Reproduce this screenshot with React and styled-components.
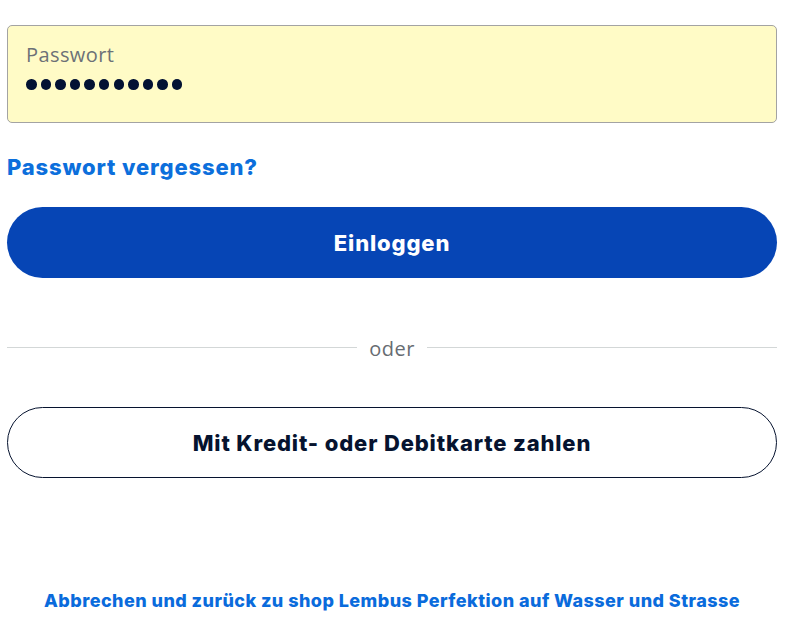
import React from 'react';
import styled, { createGlobalStyle } from 'styled-components';

const GlobalStyle = createGlobalStyle`
  body {
    margin: 0;
    background: #fff;
    font-family: 'Inter', 'Liberation Sans', sans-serif;
  }
`;

const Page = styled.div`
  width: 770px;
  padding: 25px 0 0 7px;
  display: flex;
  flex-direction: column;
`;

const Field = styled.label`
  box-sizing: border-box;
  height: 98px;
  background: #fffbc6;
  border: 1px solid #a3a3a3;
  border-radius: 5px;
  padding: 16px 18px 0;
  display: flex;
  flex-direction: column;
`;

const FieldLabel = styled.span`
  font-family: 'Open Sans', 'Liberation Sans', sans-serif;
  font-size: 20px;
  letter-spacing: 0.4px;
  color: #6c7177;
  line-height: 26px;
`;

const Dots = styled.span`
  margin-top: 11px;
  display: flex;
  gap: 4.1px;
`;

const Dot = styled.span`
  width: 10.5px;
  height: 10.5px;
  border-radius: 50%;
  background: #031233;
`;

const Forgot = styled.a`
  margin-top: 30px;
  font-size: 22px;
  font-weight: 800;
  letter-spacing: 0.85px;
  color: #0c6fdc;
  line-height: 28px;
  text-decoration: none;
`;

const PillButton = styled.button`
  box-sizing: border-box;
  height: 71px;
  width: 100%;
  border-radius: 36px;
  font-family: 'Inter', sans-serif;
  font-size: 22px;
  font-weight: 800;
  letter-spacing: 0.85px;
  cursor: pointer;
  background: ${({ $primary }) => ($primary ? '#0645b5' : '#fff')};
  color: ${({ $primary }) => ($primary ? '#fff' : '#06132f')};
  border: ${({ $primary }) => ($primary ? 'none' : '1px solid #06132f')};
`;

const Primary = styled(PillButton)`
  margin-top: 26px;
`;

const Divider = styled.div`
  margin: 56px 0 0;
  display: flex;
  align-items: center;
  gap: 12px;
  height: 26px;

  &::before, &::after {
    content: '';
    flex: 1;
    height: 1px;
    background: #d3d7d7;
  }
`;

const DividerText = styled.span`
  font-family: 'Open Sans', 'Liberation Sans', sans-serif;
  font-size: 20px;
  letter-spacing: 0.5px;
  color: #676c72;
  margin-top: 3px;
`;

const Secondary = styled(PillButton)`
  margin-top: 47px;
`;

const Cancel = styled.a`
  margin-top: 111px;
  text-align: center;
  font-size: 18px;
  font-weight: 800;
  letter-spacing: 0.45px;
  color: #0a6bdc;
  text-decoration: none;
  line-height: 24px;
`;

export default function App() {
  return (
    <>
      <GlobalStyle />
      <Page>
        <Field>
          <FieldLabel>Passwort</FieldLabel>
          <Dots>
            {Array.from({ length: 11 }).map((_, i) => <Dot key={i} />)}
          </Dots>
        </Field>
        <Forgot href="#">Passwort vergessen?</Forgot>
        <Primary $primary>Einloggen</Primary>
        <Divider><DividerText>oder</DividerText></Divider>
        <Secondary>Mit Kredit- oder Debitkarte zahlen</Secondary>
        <Cancel href="#">Abbrechen und zurück zu shop Lembus Perfektion auf Wasser und Strasse</Cancel>
      </Page>
    </>
  );
}
